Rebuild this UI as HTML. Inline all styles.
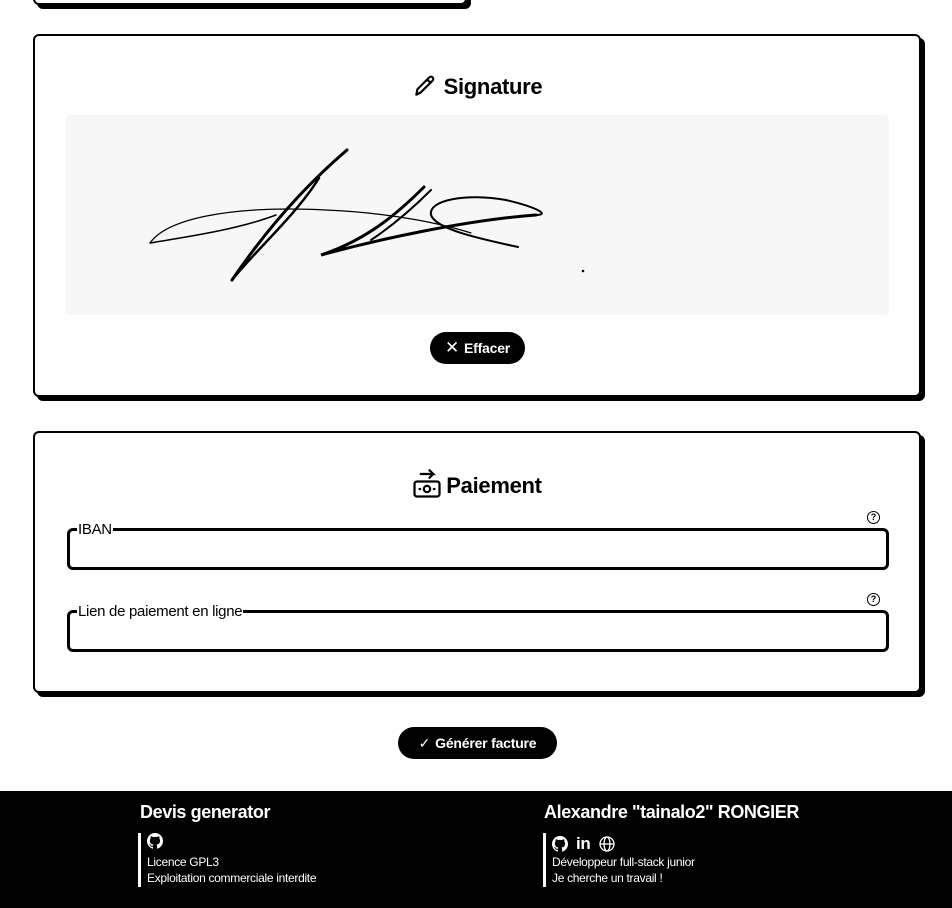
<!DOCTYPE html>
<html><head><meta charset="utf-8"><style>
body{margin:0;width:952px;height:908px;background:#fff;font-family:"Liberation Sans",sans-serif;position:relative;overflow:hidden;color:#000}
.card{position:absolute;left:33px;width:884px;border:2px solid #000;border-radius:6px;background:#fff;box-shadow:4px 4px 0 #000}
h2{position:absolute;left:0;right:0;margin:0;text-align:center;font-size:22px;font-weight:bold;letter-spacing:-0.3px}
.btn{position:absolute;background:#000;color:#fff;border-radius:16px;font-size:14px;font-weight:bold;display:flex;align-items:center;justify-content:center;gap:5px;letter-spacing:-0.2px}
.fs{position:absolute;left:32px;width:816px;height:36px;border:3px solid #000;border-radius:6px}
.lg{position:absolute;left:7px;top:-10px;background:#fff;font-size:15px;padding:0 1px;letter-spacing:-0.3px}
.q{position:absolute;width:11px;height:11px;border:1.5px solid #000;border-radius:50%;font-size:9px;font-weight:bold;text-align:center;line-height:11px}
.foot{position:absolute;left:0;top:791px;width:952px;height:117px;background:#000;color:#fff}
.ft{position:absolute;font-size:18px;font-weight:bold;letter-spacing:-0.4px}
.fb{position:absolute;border-left:3px solid #fff;padding-left:6px;font-size:12px;line-height:16px;letter-spacing:-0.3px}
</style></head><body>
<div style="position:absolute;left:33px;top:-10px;width:430px;height:11px;border:2px solid #000;border-radius:6px;box-shadow:4px 4px 0 #000"></div>

<div class="card" style="top:34px;height:359px">
 <h2 style="top:37px"><svg width="26" height="26" viewBox="0 0 24 24" fill="none" stroke="#000" stroke-width="2" stroke-linecap="round" stroke-linejoin="round" style="vertical-align:-5px;margin-right:6px"><path d="M4 20l1-5L16 4a2.1 2.1 0 0 1 3 3L8 18z M14 6l3 3"/></svg>Signature</h2>
 <div style="position:absolute;left:31px;top:79px;width:823px;height:200px;background:#f7f7f7;border-radius:4px">
  <svg width="823" height="200" style="position:absolute;left:0;top:0" fill="none" stroke="#000" stroke-linecap="round">
   <path d="M281 35C240 70 200 115 166 165" stroke-width="3"/>
   <path d="M253 63C230 100 190 135 166 165" stroke-width="2.5"/>
   <path d="M84 128C100 105 160 90 260 95C330 98 380 110 405 118" stroke-width="1.2"/>
   <path d="M84 128C120 122 170 115 210 100" stroke-width="1.5"/>
   <path d="M358 72C330 100 300 125 255 140C310 125 400 105 470 100" stroke-width="3"/>
   <path d="M365 75C340 100 320 115 305 125" stroke-width="2"/>
   <path d="M452 132C420 125 370 115 365 100C362 85 400 78 440 85C470 92 485 100 470 100" stroke-width="2"/>
   <circle cx="517" cy="156" r="1.3" fill="#000" stroke="none"/>
  </svg>
 </div>
 <div class="btn" style="left:395px;top:296px;width:95px;height:32px"><span style="font-weight:normal;font-size:17px">✕</span>Effacer</div>
</div>

<div class="card" style="top:431px;height:258px">
 <h2 style="top:36px"><svg width="30" height="30" viewBox="0 0 24 24" fill="none" stroke="#000" stroke-width="1.8" stroke-linecap="round" style="vertical-align:-6px;margin-right:4px"><path d="M7 4h10l-3-3M17 4l-3 3"/><rect x="2" y="10" width="20" height="12" rx="2"/><circle cx="12" cy="16" r="2.5"/><path d="M6 16h.5M17.5 16h.5"/></svg>Paiement</h2>
 <div class="q" style="left:832px;top:78px">?</div>
 <div class="fs" style="top:95px"><span class="lg">IBAN</span></div>
 <div class="q" style="left:832px;top:160px">?</div>
 <div class="fs" style="top:177px"><span class="lg">Lien de paiement en ligne</span></div>
</div>

<div class="btn" style="left:398px;top:727px;width:159px;height:32px"><span style="font-weight:normal">✓</span> Générer facture</div>

<div class="foot">
 <div class="ft" style="left:140px;top:11px">Devis generator</div>
 <div class="fb" style="left:138px;top:42px;height:54px"><div style="height:21px"><svg width="16" height="16" viewBox="0 0 16 16"><path fill="#fff" d="M8 0C3.6 0 0 3.6 0 8c0 3.5 2.3 6.5 5.5 7.6.4.1.5-.2.5-.4v-1.4c-2.2.5-2.7-1-2.7-1-.4-.9-.9-1.2-.9-1.2-.7-.5.1-.5.1-.5.8.1 1.2.8 1.2.8.7 1.3 1.9.9 2.3.7.1-.5.3-.9.5-1.1-1.8-.2-3.6-.9-3.6-4 0-.9.3-1.6.8-2.1-.1-.2-.4-1 .1-2.1 0 0 .7-.2 2.2.8a7.6 7.6 0 0 1 4 0c1.5-1 2.2-.8 2.2-.8.4 1.1.2 1.900.1 2.100.5.600.8 1.3.8 2.100 0 3.100-1.900 3.800-3.600 4 .3.3.6.8.6 1.500v2.200c0 .2.1.5.6.4C13.700 14.500 16 11.500 16 8c0-4.400-3.600-8-8-8z"/></svg></div>Licence GPL3<br>Exploitation commerciale interdite</div>
 <div class="ft" style="left:544px;top:11px">Alexandre "tainalo2" RONGIER</div>
 <div class="fb" style="left:543px;top:42px;height:54px"><div style="height:21px;display:flex;gap:8px;align-items:center"><svg width="16" height="16" viewBox="0 0 16 16"><path fill="#fff" d="M8 0C3.6 0 0 3.6 0 8c0 3.5 2.3 6.5 5.5 7.6.4.1.5-.2.5-.4v-1.4c-2.2.5-2.7-1-2.7-1-.4-.9-.9-1.2-.9-1.2-.7-.5.1-.5.1-.5.8.1 1.2.8 1.2.8.7 1.3 1.9.9 2.3.7.1-.5.3-.9.5-1.1-1.8-.2-3.6-.9-3.6-4 0-.9.3-1.6.8-2.1-.1-.2-.4-1 .1-2.1 0 0 .7-.2 2.2.8a7.6 7.6 0 0 1 4 0c1.5-1 2.2-.8 2.2-.8.4 1.1.2 1.9.1 2.1.5.6.8 1.3.8 2.1 0 3.1-1.9 3.8-3.6 4 .3.3.6.8.6 1.5v2.2c0 .2.1.5.6.4C13.7 14.5 16 11.5 16 8c0-4.4-3.6-8-8-8z"/></svg><span style="font-size:17px;font-weight:bold">in</span><svg width="16" height="16" viewBox="0 0 16 16" fill="none" stroke="#fff" stroke-width="1.3"><circle cx="8" cy="8" r="7"/><ellipse cx="8" cy="8" rx="3" ry="7"/><path d="M1 8h14"/></svg></div>Développeur full-stack junior<br>Je cherche un travail !</div>
</div>
</body></html>
